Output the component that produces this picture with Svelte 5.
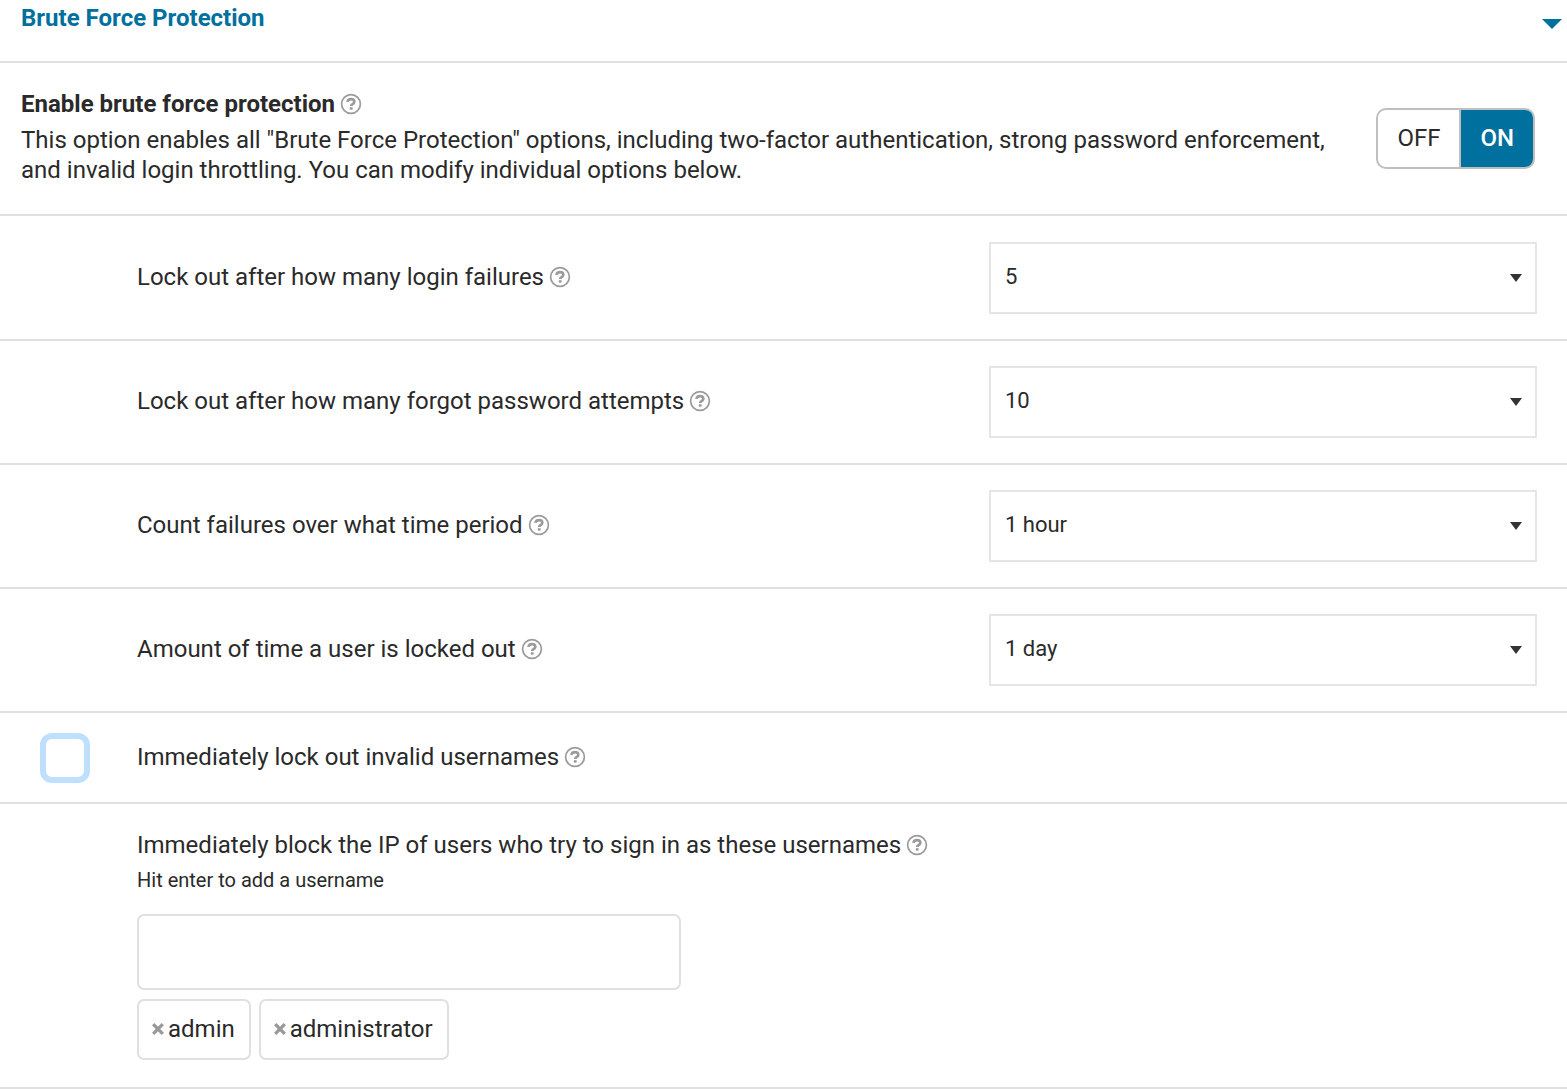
<script>
  let enabled = $state(true);
  let open = $state(true);
  let lockInvalid = $state(false);
  let newUser = $state('');
  let blocked = $state(['admin', 'administrator']);

  let settings = $state([
    { id: 'maxFailures', label: 'Lock out after how many login failures', value: '5', options: ['2', '3', '4', '5', '10', '20'] },
    { id: 'maxForgot', label: 'Lock out after how many forgot password attempts', value: '10', options: ['2', '3', '4', '5', '10', '20'] },
    { id: 'countPeriod', label: 'Count failures over what time period', value: '1 hour', options: ['5 minutes', '30 minutes', '1 hour', '1 day'] },
    { id: 'lockTime', label: 'Amount of time a user is locked out', value: '1 day', options: ['30 minutes', '1 hour', '1 day', '5 days'] },
  ]);

  function addUser(e) {
    if (e.key !== 'Enter') return;
    const name = newUser.trim();
    if (name && !blocked.includes(name)) blocked.push(name);
    newUser = '';
  }

  function removeUser(name) {
    blocked = blocked.filter((n) => n !== name);
  }
</script>

{#snippet help(topic)}
  <a class="help" href="#help" aria-label="Help: {topic}">
    <svg viewBox="0 0 22 22" width="22" height="22" fill="none" aria-hidden="true">
      <circle cx="11" cy="11" r="9.4" stroke="#9b9b9b" stroke-width="1.7" />
      <path d="M7.4 8.9C7.7 7.1 9.1 6.2 11 6.2c2 0 3.3 1 3.3 2.5 0 1.3-.8 1.9-1.8 2.5-.9.5-1.3.9-1.3 1.9" stroke="#9b9b9b" stroke-width="2.7" />
      <rect x="9.8" y="14.2" width="2.8" height="2.5" fill="#9b9b9b" />
    </svg>
  </a>
{/snippet}

<section class="panel">
  <header class="head">
    <h2>Brute Force Protection</h2>
    <button class="collapse" aria-label="Toggle section" aria-expanded={open} onclick={() => (open = !open)}>
      <svg viewBox="0 0 20 10" width="20" height="10" aria-hidden="true"><path d="M0 0h20L10 10z" fill="#00709e" /></svg>
    </button>
  </header>

  {#if open}
    <div class="enable">
      <div class="enable-text">
        <h3>Enable brute force protection {@render help('Enable brute force protection')}</h3>
        <p>This option enables all "Brute Force Protection" options, including two-factor authentication, strong password enforcement, and invalid login throttling. You can modify individual options below.</p>
      </div>
      <div class="switch" role="group" aria-label="Enable brute force protection">
        <button class:active={!enabled} aria-pressed={!enabled} onclick={() => (enabled = false)}>OFF</button>
        <button class:active={enabled} aria-pressed={enabled} onclick={() => (enabled = true)}>ON</button>
      </div>
    </div>

    <div class="settings">
      {#each settings as s (s.id)}
        <div class="setting">
          <div class="label"><label for={s.id}>{s.label}</label> {@render help(s.label)}</div>
          <div class="select">
            <select id={s.id} bind:value={s.value}>
              {#each s.options as o}
                <option value={o}>{o}</option>
              {/each}
            </select>
            <svg viewBox="0 0 12 8" width="12" height="8" aria-hidden="true"><path d="M0 0h12L6 8z" fill="#333" /></svg>
          </div>
        </div>
      {/each}
    </div>

    <div class="check">
      <input id="lockInvalid" type="checkbox" bind:checked={lockInvalid} />
      <div class="label"><label for="lockInvalid">Immediately lock out invalid usernames</label> {@render help('Invalid usernames')}</div>
    </div>

    <div class="block">
      <div class="label"><label for="blockUsers">Immediately block the IP of users who try to sign in as these usernames</label> {@render help('Blocked usernames')}</div>
      <p class="hint" id="blockHint">Hit enter to add a username</p>
      <input id="blockUsers" type="text" aria-describedby="blockHint" bind:value={newUser} onkeydown={addUser} />
      <ul class="tags">
        {#each blocked as name (name)}
          <li>
            <button aria-label="Remove {name}" onclick={() => removeUser(name)}>
              <svg viewBox="0 0 12 12" width="12" height="12" aria-hidden="true"><path d="M1.2 1.2l9.6 9.6M10.8 1.2l-9.6 9.6" stroke="#999" stroke-width="3.3" /></svg>
            </button>
            <span>{name}</span>
          </li>
        {/each}
      </ul>
    </div>
  {/if}
</section>

<style>
  :global(body) {
    background: #fff;
  }

  .panel {
    font-family: Roboto, "Liberation Sans", sans-serif;
    font-size: 24px;
    line-height: 30px;
    color: #2a2a2a;
  }

  h2, h3, p, ul {
    margin: 0;
    padding: 0;
  }

  button {
    font: inherit;
    color: inherit;
    border: 0;
    padding: 0;
    background: none;
    cursor: pointer;
  }

  .head {
    display: flex;
    justify-content: space-between;
    align-items: flex-start;
    padding: 3px 5px 28px 21px;
    border-bottom: 2px solid #e0e0e0;
  }

  h2, h3 {
    font-size: 24px;
    font-weight: 700;
    line-height: 30px;
  }
  h2 { color: #00709e; }

  .collapse {
    display: flex;
    padding-top: 16px;
  }

  .help {
    display: inline-flex;
    margin-left: -1px;
    vertical-align: -3px;
  }

  .enable {
    display: flex;
    align-items: flex-start;
    justify-content: space-between;
    gap: 40px;
    padding: 26px 32px 29px 21px;
    border-bottom: 2px solid #e0e0e0;
  }
  .enable-text p { margin-top: 6px; }

  .switch {
    display: flex;
    flex-shrink: 0;
    margin-top: 19px;
    border: 2px solid #bfbfbf;
    border-radius: 10px;
    overflow: hidden;
  }
  .switch button { padding: 13px 19px 14px; }
  .switch button + button { border-left: 2px solid #bfbfbf; }
  .switch .active {
    background: #00709e;
    color: #fff;
    font-weight: 500;
  }

  .settings { padding: 1px 0; }

  .setting {
    display: flex;
    align-items: center;
    justify-content: space-between;
    padding: 25px 30px 25px 137px;
    border-bottom: 2px solid #e0e0e0;
  }
  .setting .label, .check .label { padding-bottom: 2px; }

  .select {
    display: grid;
    align-items: center;
    width: 548px;
  }
  .select select, .select svg { grid-area: 1 / 1; }
  .select svg {
    justify-self: end;
    margin-right: 15px;
    pointer-events: none;
  }
  select {
    appearance: none;
    width: 100%;
    height: 72px;
    padding: 0 40px 2px 14px;
    border: 2px solid #e5e5e5;
    border-radius: 0;
    background: #fff;
    font: inherit;
    font-size: 22px;
    color: inherit;
  }

  .check {
    display: flex;
    align-items: center;
    gap: 47px;
    padding: 19px 30px 19px 40px;
    border-bottom: 2px solid #e0e0e0;
  }
  .check input {
    appearance: none;
    width: 50px;
    height: 50px;
    margin: 0;
    border: 6px solid #bfdfff;
    border-radius: 12px;
    background: #fff;
  }
  .check input:checked { background: #00709e; }

  .block {
    padding: 26px 30px 27px 137px;
    border-bottom: 2px solid #e0e0e0;
  }
  .hint {
    margin-top: 7px;
    font-size: 20px;
    line-height: 26px;
  }
  .block > input {
    display: block;
    box-sizing: border-box;
    width: 544px;
    max-width: 100%;
    height: 76px;
    margin-top: 21px;
    padding: 0 16px;
    border: 2px solid #e0e0e0;
    border-radius: 7px;
    font: inherit;
    color: inherit;
  }

  .tags {
    display: flex;
    flex-wrap: wrap;
    gap: 8px;
    margin-top: 9px;
    list-style: none;
  }
  .tags li {
    display: flex;
    align-items: center;
    gap: 4px;
    padding: 13px 14px 14px 13px;
    border: 2px solid #e0e0e0;
    border-radius: 7px;
  }
  .tags button { display: flex; }
</style>
